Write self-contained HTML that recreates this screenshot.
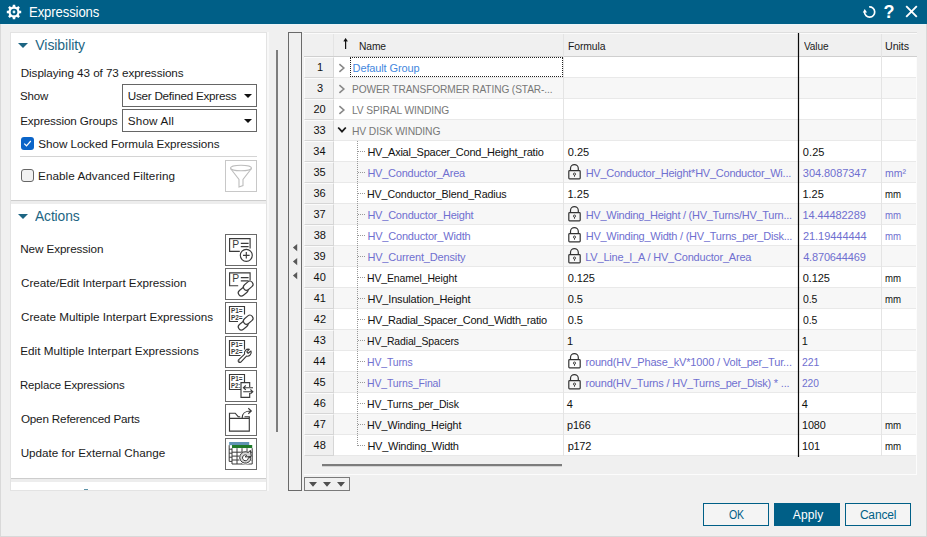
<!DOCTYPE html>
<html><head><meta charset="utf-8"><title>Expressions</title>
<style>
html,body{margin:0;padding:0;}
body{width:927px;height:537px;overflow:hidden;background:#f0f0f0;position:relative;font-family:"Liberation Sans",sans-serif;font-size:12px;color:#1a1a1a;}
div,svg,span.x{position:absolute;box-sizing:border-box;}
span.x{white-space:nowrap;}
.ttl{font-size:14px;line-height:18px;color:#fff;}
.sh{font-size:14px;line-height:18px;color:#1c6583;}
.lbl{font-size:11.700px;line-height:16px;color:#1a1a1a;}
.th{font-size:11px;line-height:15px;color:#1a1a1a;}
.td{font-size:11px;line-height:15px;color:#111;}
.td.grp{color:#777;}
.td.def{color:#4487de;}
.td.lk{color:#6f6fd0;}
.td.u{font-size:11px;}
.btn{font-size:12px;line-height:16px;color:#005f87;}
.btn.bw{color:#fff;}
.title{left:0;top:0;width:927px;height:24px;background:#005f87;}
.lp{left:10px;top:32px;width:257px;height:459px;background:#fff;border:1px solid #e3e3e3;}
.dd{left:122px;width:135px;height:23px;border:1px solid #666;background:#fff;}
.dd i{position:absolute;left:121px;top:9px;width:0;height:0;border-left:4px solid transparent;border-right:4px solid transparent;border-top:4.500px solid #111;}
.abtn{left:225px;width:32px;height:32px;border:1px solid #6a6a6a;background:#fff;}
.grid{left:304px;top:33px;width:613px;height:442px;background:#f0f0f0;border-right:1px solid #fcfcfc;border-bottom:1px solid #fcfcfc;}
.hdr{left:304px;top:32px;width:613px;height:25px;background:#f0f0f0;border-top:1px solid #dedede;border-bottom:1px solid #cfcfcf;box-shadow:inset 0 1px 0 #fbfbfb;}
.vl{top:34px;width:1px;height:422px;background:#e4e4e4;}
.row{left:334px;width:582px;height:21px;background:#fff;border-bottom:1px solid #e9e9e9;}
.row.alt{background:#f7f7f7;}
.num{left:304px;width:30px;height:21px;background:#f0f0f0;border-top:1px solid #fbfbfb;border-left:1px solid #fbfbfb;border-right:1px solid #d6d6d6;border-bottom:1px solid #d6d6d6;}
.tick{left:358px;width:7px;height:1px;border-top:1px dotted #999;}
.bt{top:503px;width:66px;height:23px;border:1px solid #005f87;background:#f4f4f4;}
</style></head><body>
<div class="title">
<svg style="left:5.930px;top:3.840px" width="16" height="16" viewBox="0 0 16 16"><path d="M6.650 2.570L6.800 0.800L9.200 0.800L9.350 2.570L10.890 3.200L12.240 2.060L13.940 3.760L12.800 5.110L13.430 6.650L15.200 6.800L15.200 9.200L13.430 9.350L12.800 10.890L13.940 12.240L12.240 13.940L10.890 12.800L9.350 13.430L9.200 15.200L6.800 15.200L6.650 13.430L5.110 12.800L3.760 13.940L2.060 12.240L3.200 10.890L2.570 9.350L0.800 9.200L0.800 6.800L2.570 6.650L3.200 5.110L2.060 3.760L3.760 2.060L5.110 3.200Z" fill="#fff"/><circle cx="8" cy="8" r="3.350" fill="#005f87"/><circle cx="8" cy="8" r="1.400" fill="#d8f4fb"/></svg>
<svg style="left:862px;top:5px" width="16" height="15" viewBox="0 0 16 15"><path d="M7.160 1.970A5.100 5.100 0 1 1 2.500 7.050" fill="none" stroke="#fff" stroke-width="1.700"/><path d="M0.800 7.400H5.100L2.700 3.900Z" fill="#fff"/></svg>
<span class="x" style="left:883.400px;top:1.200px;font-size:18px;line-height:22px;font-weight:bold;color:#fff">?</span>
<svg style="left:905px;top:5px" width="13" height="13" viewBox="0 0 13 13"><path d="M1.200 1.200L11.800 11.800M11.800 1.200L1.200 11.800" stroke="#fff" stroke-width="1.900"/></svg>
</div>
<div style="left:0;top:24px;width:927px;height:1px;background:#eaf5f9"></div>

<div style="left:0;top:24px;width:927px;height:513px;border:1px solid #d9d9d9;border-top:none;pointer-events:none"></div>
<div class="lp"></div>
<svg style="left:18px;top:43px" width="10" height="5" viewBox="0 0 10 5"><path d="M0 0H10L5 5Z" fill="#1c6583"/></svg>
<div class="dd" style="top:84px"><i></i></div>
<div class="dd" style="top:109px"><i></i></div>
<div style="left:21px;top:137px;width:13px;height:13px;background:#0a64c8;border-radius:3px"><svg style="left:2px;top:2px" width="9" height="9" viewBox="0 0 9 9"><path d="M1.200 4.600L3.500 6.800L7.800 2" fill="none" stroke="#fff" stroke-width="1.200"/></svg></div>
<div style="left:20px;top:156px;width:237px;height:1px;background:#d4d4d4"></div>
<div style="left:21px;top:169px;width:13px;height:13px;background:#f1f1f1;border:1px solid #666;border-radius:3px"></div>
<div style="left:225px;top:160px;width:32px;height:32px;border:1px solid #c8c8c8;background:#fff"><svg style="left:-1px;top:-1px" width="32" height="32" viewBox="0 0 32 32"><ellipse cx="16" cy="8" rx="10.500" ry="2.800" fill="none" stroke="#bdbdbd" stroke-width="1.100"/><path d="M5.500 8.500L14 19.500V27L18 25.500V19.500L26.500 8.500" fill="none" stroke="#bdbdbd" stroke-width="1.100"/></svg></div>
<div style="left:11px;top:200px;width:255px;height:4px;background:#ededed;border-top:1px solid #cdcdcd"></div>
<svg style="left:18px;top:214px" width="10" height="5" viewBox="0 0 10 5"><path d="M0 0H10L5 5Z" fill="#1c6583"/></svg>
<div style="left:11px;top:478px;width:255px;height:4px;background:#ededed;border-top:1px solid #cdcdcd"></div>
<div style="left:84px;top:489px;width:4px;height:1px;background:#5d93a8"></div>
<div class="abtn" style="top:234px"><svg width="32" height="32" viewBox="0 0 32 32" style="left:-0.700px;top:-0.700px"><path d="M14.800 17.400H4.600V4.600H25.100V14.600" fill="none" stroke="#3a3a3a" stroke-width="1.15"/><text x="7.300" y="14" font-family="Liberation Sans,sans-serif" font-size="10.400" fill="#3a3a3a">P</text><path d="M15.800 9.400H23.600M15.800 12.600H23.600" stroke="#3a3a3a" stroke-width="1.200"/><circle cx="21.300" cy="21.300" r="6" fill="#fff" stroke="#3a3a3a" stroke-width="1.15"/><path d="M18 21.300H24.600M21.300 18V24.600" stroke="#3a3a3a" stroke-width="1.15"/></svg></div>
<div class="abtn" style="top:268px"><svg width="32" height="32" viewBox="0 0 32 32" style="left:-0.700px;top:-0.700px"><path d="M13.200 17.700H4.600V4.900H25.100V12.600" fill="none" stroke="#3a3a3a" stroke-width="1.15"/><g transform="translate(0 0.300)"><text x="7.300" y="14" font-family="Liberation Sans,sans-serif" font-size="10.400" fill="#3a3a3a">P</text><path d="M15.800 9.400H23.600M15.800 12.600H23.600" stroke="#3a3a3a" stroke-width="1.200"/></g><g fill="#fff" stroke="#3a3a3a" stroke-width="1.15"><rect x="12.800" y="20.400" width="10.600" height="6.200" rx="3.100" transform="rotate(-40 18.100 23.500)"/><rect x="17.900" y="14.600" width="10.600" height="6.200" rx="3.100" transform="rotate(-40 23.200 17.700)"/></g></svg></div>
<div class="abtn" style="top:302px"><svg width="32" height="32" viewBox="0 0 32 32" style="left:-0.700px;top:-0.700px"><path d="M13 19.500H4.500V4.500H19.500V12.500" fill="none" stroke="#3a3a3a" stroke-width="1.15"/><text x="6" y="10.900" font-family="Liberation Sans,sans-serif" font-weight="bold" font-size="6.600" textLength="11.600" lengthAdjust="spacingAndGlyphs" fill="#3a3a3a">P1=</text><text x="6" y="18.300" font-family="Liberation Sans,sans-serif" font-weight="bold" font-size="6.600" textLength="11.600" lengthAdjust="spacingAndGlyphs" fill="#3a3a3a">P2=</text><g fill="#fff" stroke="#3a3a3a" stroke-width="1.15"><rect x="12.800" y="20.400" width="10.600" height="6.200" rx="3.100" transform="rotate(-40 18.100 23.500)"/><rect x="17.900" y="14.600" width="10.600" height="6.200" rx="3.100" transform="rotate(-40 23.200 17.700)"/></g></svg></div>
<div class="abtn" style="top:336px"><svg width="32" height="32" viewBox="0 0 32 32" style="left:-0.700px;top:-0.700px"><path d="M15.500 19.500H4.500V4.500H19.500V13.500" fill="none" stroke="#3a3a3a" stroke-width="1.15"/><text x="6" y="10.900" font-family="Liberation Sans,sans-serif" font-weight="bold" font-size="6.600" textLength="11.600" lengthAdjust="spacingAndGlyphs" fill="#3a3a3a">P1=</text><text x="6" y="18.300" font-family="Liberation Sans,sans-serif" font-weight="bold" font-size="6.600" textLength="11.600" lengthAdjust="spacingAndGlyphs" fill="#3a3a3a">P2=</text><path d="M13.300 24.200L19.600 18.200A3.900 3.900 0 0 1 24.300 13.300L21.800 15.900L23.100 17.300L26 15A3.900 3.900 0 0 1 21.500 20.100L15.600 26.300A1.650 1.650 0 0 1 13.300 24.200Z" fill="#fff" stroke="#3a3a3a" stroke-width="1.15" stroke-linejoin="round"/><circle cx="14.600" cy="25.100" r="0.550" fill="#3a3a3a"/></svg></div>
<div class="abtn" style="top:370px"><svg width="32" height="32" viewBox="0 0 32 32" style="left:-0.700px;top:-0.700px"><path d="M16 19.500H4.500V4.500H19.500V12.500" fill="none" stroke="#3a3a3a" stroke-width="1.15"/><text x="6" y="10.900" font-family="Liberation Sans,sans-serif" font-weight="bold" font-size="6.600" textLength="11.600" lengthAdjust="spacingAndGlyphs" fill="#3a3a3a">P1=</text><text x="6" y="18.300" font-family="Liberation Sans,sans-serif" font-weight="bold" font-size="6.600" textLength="9.200" lengthAdjust="spacingAndGlyphs" fill="#3a3a3a">P2:</text><path d="M24.700 17V12.600H16V27.400H24.700V23" fill="#fff" stroke="#3a3a3a" stroke-width="1.15"/><path d="M28 17.700H18.600M20.800 15.500L18.400 17.700L20.800 19.900M18.200 21.700H27.600M25.400 19.500L27.800 21.700L25.400 23.900" fill="none" stroke="#3a3a3a" stroke-width="1.15"/></svg></div>
<div class="abtn" style="top:404px"><svg width="32" height="32" viewBox="0 0 32 32" style="left:-0.700px;top:-0.700px"><path d="M4.500 14.300V9.200H10.200L13.200 12.700H15.200M19.500 12.700H24.300V14.300M4.500 14.300H24.300V27.100H4.500Z" fill="none" stroke="#3a3a3a" stroke-width="1.15"/><path d="M17.200 14C17.200 9 19.500 7 26 7M23.300 4.300L26.300 7L23.300 9.700" fill="none" stroke="#3a3a3a" stroke-width="1.15"/></svg></div>
<div class="abtn" style="top:438px"><svg width="32" height="32" viewBox="0 0 32 32" style="left:-0.700px;top:-0.700px"><rect x="4.200" y="4" width="20" height="3.200" fill="#5f93b3"/><path d="M4.200 7.200V23.400H8M4.200 11.200H7M4.200 15.200H7M4.200 19.200H7" stroke="#3a3a3a" stroke-width="1" fill="none"/><rect x="7" y="7" width="20.200" height="3.200" fill="#1f7a2a"/><rect x="7" y="10.200" width="20.200" height="15.800" fill="#fff"/><path d="M7 10.200V26H27.200V10.200M7 14.200H27.200M7 18.100H27.200M7 22H27.200M12 10.200V26M17 10.200V26M22 10.200V26" stroke="#3a3a3a" stroke-width="1" fill="none"/><circle cx="20.400" cy="19.800" r="6.600" fill="#fff"/><path d="M23.400 14.600A5.700 5.700 0 1 0 26.100 19.600H23.300A2.900 2.900 0 1 1 21.700 17.200L20.200 19L26.300 18.400L25.300 12.300Z" fill="#d6d6d6" stroke="#3a3a3a" stroke-width="1" stroke-linejoin="round"/></svg></div>
<div style="left:267px;top:32px;width:2px;height:459px;background:#f8f8f8"></div><div style="left:276px;top:50px;width:2px;height:382px;background:#7d7d7d"></div>
<div style="left:288px;top:32px;width:14px;height:459px;border:1px solid #6a6a6a;background:#f0f0f0"></div>
<svg style="left:292px;top:243px" width="6" height="38" viewBox="0 0 6 38"><path d="M5.200 1V8.200L0.900 4.600ZM5.200 15V22.200L0.900 18.600ZM5.200 29V36.200L0.900 32.600Z" fill="#585858"/></svg>

<div class="grid"></div>
<div class="hdr"></div>
<div class="vl" style="left:333px;height:22px"></div>
<div class="vl" style="left:563px"></div>
<div class="vl" style="left:881px"></div>
<div class="row" style="top:57px"></div><div class="num" style="top:57px"></div>
<svg style="left:338px;top:63px" width="8" height="10" viewBox="0 0 8 10"><path d="M1.400 1.200L5.800 5L1.400 8.800" fill="none" stroke="#888" stroke-width="1.600"/></svg>
<div class="row alt" style="top:78px"></div><div class="num" style="top:78px"></div>
<svg style="left:338px;top:84px" width="8" height="10" viewBox="0 0 8 10"><path d="M1.400 1.200L5.800 5L1.400 8.800" fill="none" stroke="#888" stroke-width="1.600"/></svg>
<div class="row" style="top:99px"></div><div class="num" style="top:99px"></div>
<svg style="left:338px;top:105px" width="8" height="10" viewBox="0 0 8 10"><path d="M1.400 1.200L5.800 5L1.400 8.800" fill="none" stroke="#888" stroke-width="1.600"/></svg>
<div class="row alt" style="top:120px"></div><div class="num" style="top:120px"></div>
<svg style="left:337px;top:126px" width="10" height="8" viewBox="0 0 10 8"><path d="M1.200 1.500L5 5.600L8.800 1.500" fill="none" stroke="#1a1a1a" stroke-width="1.800"/></svg>
<div class="row" style="top:141px"></div><div class="num" style="top:141px"></div>
<div class="tick" style="top:151px"></div>
<div class="row alt" style="top:162px"></div><div class="num" style="top:162px"></div>
<div class="tick" style="top:172px"></div>
<svg class="lock" style="left:567px;top:163px" width="15" height="18" viewBox="0 0 15 18"><path d="M3.500 7.700V5.500a3.900 3.850 0 0 1 7.800 0V7.700" fill="none" stroke="#333" stroke-width="1.200"/><rect x="1.800" y="7.700" width="11.400" height="8.200" rx="0.800" fill="none" stroke="#333" stroke-width="1.200"/><circle cx="7.500" cy="11.100" r="1.100" fill="none" stroke="#333" stroke-width="0.900"/><path d="M7.500 12.200V13.700" stroke="#333" stroke-width="1"/></svg>
<div class="row" style="top:183px"></div><div class="num" style="top:183px"></div>
<div class="tick" style="top:193px"></div>
<div class="row alt" style="top:204px"></div><div class="num" style="top:204px"></div>
<div class="tick" style="top:214px"></div>
<svg class="lock" style="left:567px;top:205px" width="15" height="18" viewBox="0 0 15 18"><path d="M3.500 7.700V5.500a3.900 3.850 0 0 1 7.800 0V7.700" fill="none" stroke="#333" stroke-width="1.200"/><rect x="1.800" y="7.700" width="11.400" height="8.200" rx="0.800" fill="none" stroke="#333" stroke-width="1.200"/><circle cx="7.500" cy="11.100" r="1.100" fill="none" stroke="#333" stroke-width="0.900"/><path d="M7.500 12.200V13.700" stroke="#333" stroke-width="1"/></svg>
<div class="row" style="top:225px"></div><div class="num" style="top:225px"></div>
<div class="tick" style="top:235px"></div>
<svg class="lock" style="left:567px;top:226px" width="15" height="18" viewBox="0 0 15 18"><path d="M3.500 7.700V5.500a3.900 3.850 0 0 1 7.800 0V7.700" fill="none" stroke="#333" stroke-width="1.200"/><rect x="1.800" y="7.700" width="11.400" height="8.200" rx="0.800" fill="none" stroke="#333" stroke-width="1.200"/><circle cx="7.500" cy="11.100" r="1.100" fill="none" stroke="#333" stroke-width="0.900"/><path d="M7.500 12.200V13.700" stroke="#333" stroke-width="1"/></svg>
<div class="row alt" style="top:246px"></div><div class="num" style="top:246px"></div>
<div class="tick" style="top:256px"></div>
<svg class="lock" style="left:567px;top:247px" width="15" height="18" viewBox="0 0 15 18"><path d="M3.500 7.700V5.500a3.900 3.850 0 0 1 7.800 0V7.700" fill="none" stroke="#333" stroke-width="1.200"/><rect x="1.800" y="7.700" width="11.400" height="8.200" rx="0.800" fill="none" stroke="#333" stroke-width="1.200"/><circle cx="7.500" cy="11.100" r="1.100" fill="none" stroke="#333" stroke-width="0.900"/><path d="M7.500 12.200V13.700" stroke="#333" stroke-width="1"/></svg>
<div class="row" style="top:267px"></div><div class="num" style="top:267px"></div>
<div class="tick" style="top:277px"></div>
<div class="row alt" style="top:288px"></div><div class="num" style="top:288px"></div>
<div class="tick" style="top:298px"></div>
<div class="row" style="top:309px"></div><div class="num" style="top:309px"></div>
<div class="tick" style="top:319px"></div>
<div class="row alt" style="top:330px"></div><div class="num" style="top:330px"></div>
<div class="tick" style="top:340px"></div>
<div class="row" style="top:351px"></div><div class="num" style="top:351px"></div>
<div class="tick" style="top:361px"></div>
<svg class="lock" style="left:567px;top:352px" width="15" height="18" viewBox="0 0 15 18"><path d="M3.500 7.700V5.500a3.900 3.850 0 0 1 7.800 0V7.700" fill="none" stroke="#333" stroke-width="1.200"/><rect x="1.800" y="7.700" width="11.400" height="8.200" rx="0.800" fill="none" stroke="#333" stroke-width="1.200"/><circle cx="7.500" cy="11.100" r="1.100" fill="none" stroke="#333" stroke-width="0.900"/><path d="M7.500 12.200V13.700" stroke="#333" stroke-width="1"/></svg>
<div class="row alt" style="top:372px"></div><div class="num" style="top:372px"></div>
<div class="tick" style="top:382px"></div>
<svg class="lock" style="left:567px;top:373px" width="15" height="18" viewBox="0 0 15 18"><path d="M3.500 7.700V5.500a3.900 3.850 0 0 1 7.800 0V7.700" fill="none" stroke="#333" stroke-width="1.200"/><rect x="1.800" y="7.700" width="11.400" height="8.200" rx="0.800" fill="none" stroke="#333" stroke-width="1.200"/><circle cx="7.500" cy="11.100" r="1.100" fill="none" stroke="#333" stroke-width="0.900"/><path d="M7.500 12.200V13.700" stroke="#333" stroke-width="1"/></svg>
<div class="row" style="top:393px"></div><div class="num" style="top:393px"></div>
<div class="tick" style="top:403px"></div>
<div class="row alt" style="top:414px"></div><div class="num" style="top:414px"></div>
<div class="tick" style="top:424px"></div>
<div class="row" style="top:435px"></div><div class="num" style="top:435px"></div>
<div class="tick" style="top:445px"></div>
<div class="vl" style="left:563px;top:57px;height:399px"></div>
<div class="vl" style="left:881px;top:57px;height:399px"></div>
<div style="left:798px;top:33px;width:1px;height:424px;background:#0c0c0c"></div><div style="left:797px;top:33px;width:3px;height:424px;background:rgba(0,0,0,0.100)"></div>
<svg style="left:341px;top:38px" width="9" height="12" viewBox="0 0 9 12"><path d="M4.600 1V11M2.900 3.500L4.600 1L6.300 3.500" fill="none" stroke="#111" stroke-width="1.200"/></svg>
<div style="left:350px;top:57px;width:213px;height:20px;border:1px dotted #222"></div>
<div style="left:357px;top:141px;width:1px;height:305px;border-left:1px dotted #999"></div>
<div style="left:322px;top:464px;width:240px;height:2px;background:#7c7c7c"></div><div style="left:322px;top:466px;width:240px;height:1px;background:#d4d4d4"></div>
<div style="left:304px;top:477px;width:46px;height:14px;border:1px solid #7a7a7a;background:#f0f0f0"><svg style="left:4px;top:4px" width="36" height="5" viewBox="0 0 36 5"><path d="M0 0H8L4 4.700ZM14 0H22L18 4.700ZM28 0H36L32 4.700Z" fill="#505050"/></svg></div>
<div class="bt" style="left:703px"></div>
<div class="bt" style="left:774px;background:#005f87"></div>
<div class="bt" style="left:845px"></div>
<span id="ttl" class="x ttl" style="left:28.86px;top:3.01px;letter-spacing:-0.120px;transform:scaleX(0.937);transform-origin:0 0">Expressions</span>
<span id="sh1" class="x sh" style="left:35.35px;top:36.00px;letter-spacing:-0.069px">Visibility</span>
<span id="sh2" class="x sh" style="left:35.16px;top:207.00px;letter-spacing:-0.120px;transform:scaleX(0.987);transform-origin:0 0">Actions</span>
<span id="l1" class="x lbl" style="left:20.72px;top:65.00px;letter-spacing:-0.070px">Displaying 43 of 73 expressions</span>
<span id="l2" class="x lbl" style="left:20.23px;top:88.00px;letter-spacing:-0.120px;transform:scaleX(0.982);transform-origin:0 0">Show</span>
<span id="l3" class="x lbl" style="left:20.18px;top:113.00px;letter-spacing:-0.126px">Expression Groups</span>
<span id="d1" class="x lbl" style="left:127.70px;top:88.00px;letter-spacing:-0.246px">User Defined Express</span>
<span id="d2" class="x lbl" style="left:127.80px;top:113.00px;letter-spacing:0.162px">Show All</span>
<span id="l4" class="x lbl" style="left:38.30px;top:136.00px;letter-spacing:-0.064px">Show Locked Formula Expressions</span>
<span id="l5" class="x lbl" style="left:38.08px;top:168.00px;letter-spacing:0.048px">Enable Advanced Filtering</span>
<span id="a0" class="x lbl" style="left:20.18px;top:241.00px;letter-spacing:-0.084px">New Expression</span>
<span id="a1" class="x lbl" style="left:21.03px;top:275.00px;letter-spacing:-0.029px">Create/Edit Interpart Expression</span>
<span id="a2" class="x lbl" style="left:21.03px;top:309.00px;letter-spacing:-0.007px">Create Multiple Interpart Expressions</span>
<span id="a3" class="x lbl" style="left:20.18px;top:343.00px;letter-spacing:0.042px">Edit Multiple Interpart Expressions</span>
<span id="a4" class="x lbl" style="left:20.23px;top:377.00px;letter-spacing:-0.120px;transform:scaleX(0.973);transform-origin:0 0">Replace Expressions</span>
<span id="a5" class="x lbl" style="left:20.92px;top:411.00px;letter-spacing:-0.187px">Open Referenced Parts</span>
<span id="a6" class="x lbl" style="left:20.70px;top:445.00px;letter-spacing:-0.017px">Update for External Change</span>
<span id="h1" class="x th" style="left:358.74px;top:39.00px;letter-spacing:-0.120px;transform:scaleX(0.934);transform-origin:0 0">Name</span>
<span id="h2" class="x th" style="left:567.82px;top:39.00px;letter-spacing:-0.120px;transform:scaleX(0.945);transform-origin:0 0">Formula</span>
<span id="h3" class="x th" style="left:803.79px;top:39.00px;letter-spacing:-0.120px;transform:scaleX(0.916);transform-origin:0 0">Value</span>
<span id="h4" class="x th" style="left:884.99px;top:39.00px;letter-spacing:-0.120px;transform:scaleX(0.977);transform-origin:0 0">Units</span>
<span id="r0n" class="x td" style="left:317.07px;top:60.00px;letter-spacing:0.000px">1</span>
<span id="r0a" class="x td def" style="left:352.57px;top:61.00px;letter-spacing:-0.123px">Default Group</span>
<span id="r1n" class="x td" style="left:316.90px;top:81.00px;letter-spacing:0.000px">3</span>
<span id="r1a" class="x td grp" style="left:351.77px;top:82.00px;letter-spacing:-0.120px;transform:scaleX(0.923);transform-origin:0 0">POWER TRANSFORMER RATING (STAR-...</span>
<span id="r2n" class="x td" style="left:313.50px;top:102.00px;letter-spacing:0.000px">20</span>
<span id="r2a" class="x td grp" style="left:351.82px;top:103.00px;letter-spacing:-0.120px;transform:scaleX(0.931);transform-origin:0 0">LV SPIRAL WINDING</span>
<span id="r3n" class="x td" style="left:313.51px;top:123.00px;letter-spacing:0.000px">33</span>
<span id="r3a" class="x td grp" style="left:351.77px;top:124.00px;letter-spacing:-0.120px;transform:scaleX(0.938);transform-origin:0 0">HV DISK WINDING</span>
<span id="r4n" class="x td" style="left:313.31px;top:144.01px;letter-spacing:0.000px">34</span>
<span id="r4a" class="x td" style="left:367.39px;top:145.01px;letter-spacing:-0.240px">HV_Axial_Spacer_Cond_Height_ratio</span>
<span id="r4f" class="x td" style="left:567.83px;top:145.01px;letter-spacing:-0.045px">0.25</span>
<span id="r4v" class="x td" style="left:802.83px;top:145.01px;letter-spacing:0.063px">0.25</span>
<span id="r5n" class="x td" style="left:313.47px;top:165.01px;letter-spacing:0.000px">35</span>
<span id="r5a" class="x td lk" style="left:367.39px;top:166.01px;letter-spacing:-0.233px">HV_Conductor_Area</span>
<span id="r5f" class="x td lk" style="left:585.68px;top:166.01px;letter-spacing:-0.244px">HV_Conductor_Height*HV_Conductor_Wi...</span>
<span id="r5v" class="x td lk" style="left:802.85px;top:166.01px;letter-spacing:-0.055px">304.8087347</span>
<span id="r5u" class="x td lk u" style="left:885.13px;top:166.01px;letter-spacing:0.000px;transform:scaleX(0.952);transform-origin:0 0">mm²</span>
<span id="r6n" class="x td" style="left:313.41px;top:186.01px;letter-spacing:0.000px">36</span>
<span id="r6a" class="x td" style="left:366.77px;top:187.01px;letter-spacing:-0.120px;transform:scaleX(0.971);transform-origin:0 0">HV_Conductor_Blend_Radius</span>
<span id="r6f" class="x td" style="left:567.40px;top:187.01px;letter-spacing:0.066px">1.25</span>
<span id="r6v" class="x td" style="left:802.40px;top:187.01px;letter-spacing:0.027px">1.25</span>
<span id="r6u" class="x td u" style="left:884.97px;top:187.01px;letter-spacing:0.000px;transform:scaleX(0.876);transform-origin:0 0">mm</span>
<span id="r7n" class="x td" style="left:313.44px;top:207.01px;letter-spacing:0.000px">37</span>
<span id="r7a" class="x td lk" style="left:367.39px;top:208.01px;letter-spacing:-0.211px">HV_Conductor_Height</span>
<span id="r7f" class="x td lk" style="left:585.68px;top:208.01px;letter-spacing:-0.267px">HV_Winding_Height / (HV_Turns/HV_Turn...</span>
<span id="r7v" class="x td lk" style="left:802.45px;top:208.01px;letter-spacing:-0.087px">14.44482289</span>
<span id="r7u" class="x td lk u" style="left:884.97px;top:208.01px;letter-spacing:0.000px;transform:scaleX(0.876);transform-origin:0 0">mm</span>
<span id="r8n" class="x td" style="left:313.68px;top:228.01px;letter-spacing:0.000px">38</span>
<span id="r8a" class="x td lk" style="left:367.39px;top:229.01px;letter-spacing:-0.183px">HV_Conductor_Width</span>
<span id="r8f" class="x td lk" style="left:585.68px;top:229.01px;letter-spacing:-0.239px">HV_Winding_Width / (HV_Turns_per_Disk...</span>
<span id="r8v" class="x td lk" style="left:802.98px;top:229.01px;letter-spacing:-0.048px">21.19444444</span>
<span id="r8u" class="x td lk u" style="left:884.97px;top:229.01px;letter-spacing:0.000px;transform:scaleX(0.876);transform-origin:0 0">mm</span>
<span id="r9n" class="x td" style="left:313.48px;top:249.01px;letter-spacing:0.000px">39</span>
<span id="r9a" class="x td lk" style="left:367.39px;top:250.01px;letter-spacing:-0.159px">HV_Current_Density</span>
<span id="r9f" class="x td lk" style="left:585.26px;top:250.01px;letter-spacing:-0.201px">LV_Line_I_A / HV_Conductor_Area</span>
<span id="r9v" class="x td lk" style="left:803.14px;top:250.01px;letter-spacing:-0.156px">4.870644469</span>
<span id="r10n" class="x td" style="left:313.55px;top:270.00px;letter-spacing:0.000px">40</span>
<span id="r10a" class="x td" style="left:366.77px;top:271.00px;letter-spacing:-0.120px;transform:scaleX(0.950);transform-origin:0 0">HV_Enamel_Height</span>
<span id="r10f" class="x td" style="left:567.83px;top:271.00px;letter-spacing:-0.140px">0.125</span>
<span id="r10v" class="x td" style="left:802.83px;top:271.00px;letter-spacing:-0.100px">0.125</span>
<span id="r10u" class="x td u" style="left:884.97px;top:271.00px;letter-spacing:0.000px;transform:scaleX(0.876);transform-origin:0 0">mm</span>
<span id="r11n" class="x td" style="left:313.75px;top:291.00px;letter-spacing:0.000px">41</span>
<span id="r11a" class="x td" style="left:367.39px;top:292.00px;letter-spacing:-0.175px">HV_Insulation_Height</span>
<span id="r11f" class="x td" style="left:567.83px;top:292.00px;letter-spacing:-0.188px">0.5</span>
<span id="r11v" class="x td" style="left:802.84px;top:292.00px;letter-spacing:-0.120px;transform:scaleX(0.949);transform-origin:0 0">0.5</span>
<span id="r11u" class="x td u" style="left:884.97px;top:292.00px;letter-spacing:0.000px;transform:scaleX(0.876);transform-origin:0 0">mm</span>
<span id="r12n" class="x td" style="left:313.86px;top:312.00px;letter-spacing:0.000px">42</span>
<span id="r12a" class="x td" style="left:367.39px;top:313.00px;letter-spacing:-0.252px">HV_Radial_Spacer_Cond_Width_ratio</span>
<span id="r12f" class="x td" style="left:567.83px;top:313.00px;letter-spacing:-0.188px">0.5</span>
<span id="r12v" class="x td" style="left:802.84px;top:313.00px;letter-spacing:-0.120px;transform:scaleX(0.949);transform-origin:0 0">0.5</span>
<span id="r13n" class="x td" style="left:313.52px;top:333.00px;letter-spacing:0.000px">43</span>
<span id="r13a" class="x td" style="left:366.77px;top:334.00px;letter-spacing:-0.120px;transform:scaleX(0.947);transform-origin:0 0">HV_Radial_Spacers</span>
<span id="r13f" class="x td" style="left:566.99px;top:334.00px;letter-spacing:0.000px">1</span>
<span id="r13v" class="x td" style="left:801.82px;top:334.00px;letter-spacing:0.000px">1</span>
<span id="r14n" class="x td" style="left:313.34px;top:354.00px;letter-spacing:0.000px">44</span>
<span id="r14a" class="x td lk" style="left:366.77px;top:355.00px;letter-spacing:-0.120px;transform:scaleX(0.946);transform-origin:0 0">HV_Turns</span>
<span id="r14f" class="x td lk" style="left:585.42px;top:355.00px;letter-spacing:-0.150px">round(HV_Phase_kV*1000 / Volt_per_Tur...</span>
<span id="r14v" class="x td lk" style="left:802.38px;top:355.00px;letter-spacing:-0.120px;transform:scaleX(0.950);transform-origin:0 0">221</span>
<span id="r15n" class="x td" style="left:313.48px;top:375.00px;letter-spacing:0.000px">45</span>
<span id="r15a" class="x td lk" style="left:366.77px;top:376.00px;letter-spacing:-0.120px;transform:scaleX(0.950);transform-origin:0 0">HV_Turns_Final</span>
<span id="r15f" class="x td lk" style="left:585.42px;top:376.00px;letter-spacing:-0.194px">round(HV_Turns / HV_Turns_per_Disk) * ...</span>
<span id="r15v" class="x td lk" style="left:802.38px;top:376.00px;letter-spacing:-0.120px;transform:scaleX(0.929);transform-origin:0 0">220</span>
<span id="r16n" class="x td" style="left:313.62px;top:396.00px;letter-spacing:0.000px">46</span>
<span id="r16a" class="x td" style="left:366.77px;top:397.00px;letter-spacing:-0.120px;transform:scaleX(0.950);transform-origin:0 0">HV_Turns_per_Disk</span>
<span id="r16f" class="x td" style="left:566.76px;top:397.00px;letter-spacing:0.000px">4</span>
<span id="r16v" class="x td" style="left:801.76px;top:397.00px;letter-spacing:0.000px">4</span>
<span id="r17n" class="x td" style="left:313.58px;top:417.00px;letter-spacing:0.000px">47</span>
<span id="r17a" class="x td" style="left:366.77px;top:418.00px;letter-spacing:-0.120px;transform:scaleX(0.972);transform-origin:0 0">HV_Winding_Height</span>
<span id="r17f" class="x td" style="left:567.03px;top:418.00px;letter-spacing:-0.120px;transform:scaleX(0.981);transform-origin:0 0">p166</span>
<span id="r17v" class="x td" style="left:802.37px;top:418.00px;letter-spacing:-0.120px;transform:scaleX(0.982);transform-origin:0 0">1080</span>
<span id="r17u" class="x td u" style="left:884.94px;top:418.00px;letter-spacing:0.000px;transform:scaleX(0.884);transform-origin:0 0">mm</span>
<span id="r18n" class="x td" style="left:313.53px;top:438.00px;letter-spacing:0.000px">48</span>
<span id="r18a" class="x td" style="left:367.39px;top:439.00px;letter-spacing:-0.251px">HV_Winding_Width</span>
<span id="r18f" class="x td" style="left:567.64px;top:439.00px;letter-spacing:-0.272px">p172</span>
<span id="r18v" class="x td" style="left:802.00px;top:439.00px;letter-spacing:-0.120px;transform:scaleX(0.995);transform-origin:0 0">101</span>
<span id="r18u" class="x td u" style="left:884.94px;top:439.00px;letter-spacing:0.000px;transform:scaleX(0.884);transform-origin:0 0">mm</span>
<span id="b1" class="x btn" style="left:729.02px;top:507.01px;letter-spacing:-0.120px;transform:scaleX(0.879);transform-origin:0 0">OK</span>
<span id="b2" class="x btn bw" style="left:792.87px;top:507.01px;letter-spacing:0.068px">Apply</span>
<span id="b3" class="x btn" style="left:859.89px;top:507.01px;letter-spacing:-0.169px">Cancel</span>
</body></html>
